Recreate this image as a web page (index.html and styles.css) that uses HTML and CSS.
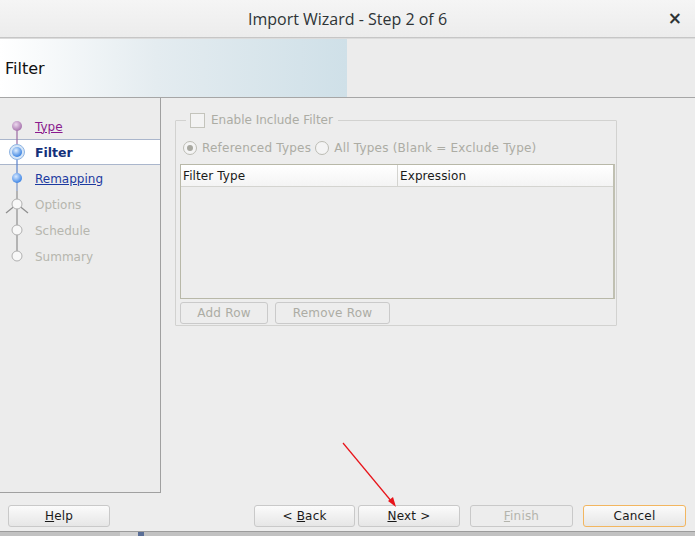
FILE: index.html
```html
<!DOCTYPE html>
<html>
<head>
<meta charset="utf-8">
<link rel="stylesheet" href="styles.css">
</head>
<body>
<div class="screen">
  <div class="dialog">
    <div class="titlebar">
      <span class="title">Import Wizard - Step 2 of 6</span>
      <span class="close">×</span>
    </div>
    <div class="header">
      <div class="header-grad"><span class="header-text">Filter</span></div>
    </div>
    <div class="main">
      <div class="steps">
        <div class="step">
          <svg class="step-icon" width="30" height="26" viewBox="0 0 30 26">
            <defs>
              <radialGradient id="gp" cx="40%" cy="35%" r="65%"><stop offset="0" stop-color="#ecd8ee"/><stop offset="1" stop-color="#a774ad"/></radialGradient>
            </defs>
            <line x1="17" y1="13" x2="17" y2="26" stroke="#9a6aa2" stroke-width="1.2"/>
            <circle cx="17" cy="13" r="5" fill="url(#gp)"/>
          </svg>
          <a class="step-label visited">Type</a>
        </div>
        <div class="step current">
          <svg class="step-icon" width="30" height="26" viewBox="0 0 30 26">
            <defs>
              <radialGradient id="gb" cx="40%" cy="35%" r="65%"><stop offset="0" stop-color="#dfeeff"/><stop offset="1" stop-color="#3c84e2"/></radialGradient>
            </defs>
            <line x1="17" y1="0" x2="17" y2="12" stroke="#9a6aa2" stroke-width="1.2"/>
            <line x1="17" y1="13" x2="17" y2="26" stroke="#5a82cc" stroke-width="1.2"/>
            <circle cx="17" cy="13" r="7.5" fill="#d6e6f8" stroke="#8fb4e2" stroke-width="1"/>
            <circle cx="17" cy="13" r="5" fill="url(#gb)"/>
          </svg>
          <span class="step-label current-label">Filter</span>
        </div>
        <div class="step">
          <svg class="step-icon" width="30" height="26" viewBox="0 0 30 26">
            <defs>
              <radialGradient id="gb2" cx="40%" cy="35%" r="65%"><stop offset="0" stop-color="#d6e8ff"/><stop offset="1" stop-color="#3f86e6"/></radialGradient>
            </defs>
            <line x1="17" y1="0" x2="17" y2="13" stroke="#5a82cc" stroke-width="1.2"/>
            <line x1="17" y1="13" x2="17" y2="26" stroke="#7f96c4" stroke-width="1.2"/>
            <circle cx="17" cy="13" r="5" fill="url(#gb2)"/>
          </svg>
          <a class="step-label link">Remapping</a>
        </div>
        <div class="step">
          <svg class="step-icon" width="30" height="26" viewBox="0 0 30 26">
            <line x1="17" y1="0" x2="17" y2="26" stroke="#8e8e8e" stroke-width="1.2"/>
            <line x1="17" y1="13" x2="6" y2="22" stroke="#8e8e8e" stroke-width="1.2"/>
            <line x1="17" y1="13" x2="28" y2="22" stroke="#8e8e8e" stroke-width="1.2"/>
            <circle cx="17" cy="13" r="5" fill="#f8f8f8" stroke="#b0b0b0" stroke-width="1"/>
          </svg>
          <span class="step-label disabled">Options</span>
        </div>
        <div class="step">
          <svg class="step-icon" width="30" height="26" viewBox="0 0 30 26">
            <line x1="17" y1="0" x2="17" y2="26" stroke="#8e8e8e" stroke-width="1.2"/>
            <circle cx="17" cy="13" r="5" fill="#f8f8f8" stroke="#b0b0b0" stroke-width="1"/>
          </svg>
          <span class="step-label disabled">Schedule</span>
        </div>
        <div class="step">
          <svg class="step-icon" width="30" height="26" viewBox="0 0 30 26">
            <line x1="17" y1="0" x2="17" y2="13" stroke="#8e8e8e" stroke-width="1.2"/>
            <circle cx="17" cy="13" r="5" fill="#f8f8f8" stroke="#b0b0b0" stroke-width="1"/>
          </svg>
          <span class="step-label disabled">Summary</span>
        </div>
      </div>
      <div class="content">
        <fieldset class="group">
          <legend class="group-legend"><span class="checkbox"></span><span class="dis-text">Enable Include Filter</span></legend>
          <div class="radios">
            <span class="radio on"></span><span class="dis-text">Referenced Types</span>
            <span class="radio second"></span><span class="dis-text">All Types (Blank = Exclude Type)</span>
          </div>
          <div class="table">
            <div class="thead">
              <div class="th th-first">Filter Type</div>
              <div class="th">Expression</div>
            </div>
            <div class="tbody"></div>
          </div>
          <div class="row-buttons">
            <span class="btn-small add">Add Row</span>
            <span class="btn-small remove">Remove Row</span>
          </div>
        </fieldset>
      </div>
    </div>
    <div class="footer">
      <span class="btn help"><span><u>H</u>elp</span></span>
      <div class="nav">
        <span class="btn back"><span>&lt; <u>B</u>ack</span></span>
        <span class="btn next"><span><u>N</u>ext &gt;</span></span>
        <span class="btn finish"><span><u>F</u>inish</span></span>
        <span class="btn cancel"><span>Cancel</span></span>
      </div>
    </div>
  </div>
  <div class="behind">
    <span class="behind-text">ager</span>
    <span class="behind-light"></span>
    <span class="behind-blue"></span>
  </div>
  <svg class="arrow" width="695" height="536" viewBox="0 0 695 536">
    <line x1="343" y1="443" x2="392" y2="502" stroke="#e8141a" stroke-width="1.2"/>
    <polygon points="396,507 388,501 393,497" fill="#e8141a"/>
  </svg>
</div>
</body>
</html>
```
FILE: styles.css
```css
html, body {
  margin: 0;
  padding: 0;
  background: #ededed;
}
.screen {
  position: relative;
  width: 695px;
  height: 536px;
  overflow: hidden;
  font-family: "DejaVu Sans", sans-serif;
  font-size: 12px;
}
.dialog {
  display: flex;
  flex-direction: column;
  height: 531px;
  background: #ededed;
}
.titlebar {
  height: 38px;
  box-sizing: border-box;
  border-bottom: 1px solid #c6c6c6;
  background: linear-gradient(#f5f5f5, #ececec);
  display: flex;
  align-items: center;
  justify-content: center;
  position: relative;
  box-shadow: 0 1px 0 #dcdcdc;
}
.title {
  font-family: "Open Sans", sans-serif;
  font-size: 16px;
  color: #2e3436;
}
.close {
  position: absolute;
  right: 13px;
  top: 8px;
  font-family: "DejaVu Sans", sans-serif;
  font-size: 17px;
  font-weight: bold;
  color: #2e3436;
}
.header {
  height: 59px;
  box-sizing: border-box;
  margin-top: 1px;
  border-bottom: 1px solid #a6a6a6;
  background: #ececec;
  display: flex;
}
.header-grad {
  width: 347px;
  background: linear-gradient(to right, #ffffff, #e4ecf0 45%, #cfe0e8);
  display: flex;
  align-items: center;
  padding-left: 5px;
  box-sizing: border-box;
}
.header-text {
  font-size: 16px;
  color: #111;
  padding-top: 1px;
}
.main {
  display: flex;
  height: 395px;
}
.steps {
  width: 161px;
  box-sizing: border-box;
  border-right: 1px solid #a0a0a0;
  border-bottom: 1px solid #a0a0a0;
  padding-top: 15px;
  background: #ececec;
}
.step {
  height: 26px;
  box-sizing: border-box;
  display: flex;
  align-items: center;
}
.step.current {
  background: #ffffff;
  border-top: 1px solid #aab6cc;
  border-bottom: 1px solid #aab6cc;
}
.step-icon {
  display: block;
  flex: none;
  width: 30px;
  height: 26px;
}
.step.current .step-icon {
  margin-top: -1px;
  margin-bottom: -1px;
}
.step-label {
  margin-left: 5px;
  font-size: 12px;
  padding-top: 1px;
}
.visited {
  color: #8a1a8e;
  text-decoration: underline;
}
.link {
  color: #1c3aa0;
  text-decoration: underline;
}
.current-label {
  color: #14307a;
  font-weight: bold;
  font-size: 12.5px;
}
.disabled {
  color: #b6b6ae;
}
.content {
  flex: 1;
  padding: 14px 0 0 14px;
}
.group {
  width: 442px;
  box-sizing: border-box;
  margin: 0;
  padding: 10px 1px 1px 4px;
  border: 1px solid #d2d2d0;
  border-radius: 1px;
}
.group-legend {
  margin-left: 6px;
  padding: 0 5px 0 4px;
  display: flex;
  align-items: center;
  height: 16px;
}
.checkbox {
  display: inline-block;
  width: 13px;
  height: 13px;
  border: 1px solid #c4c4bc;
  background: #f3f3f3;
  margin-right: 6px;
}
.dis-text {
  color: #acaca4;
}
.radios {
  display: flex;
  align-items: center;
  height: 18px;
  padding-top: 1px;
  box-sizing: border-box;
  letter-spacing: 0.22px;
}
.radio {
  display: inline-block;
  width: 12px;
  height: 12px;
  border: 1px solid #bcbcb4;
  border-radius: 50%;
  background: #f4f4f4;
  margin-left: 3px;
  margin-right: 5px;
  position: relative;
  flex: none;
}
.radio.second {
  margin-left: 4px;
}
.radio.on::after {
  content: "";
  position: absolute;
  left: 3px;
  top: 3px;
  width: 6px;
  height: 6px;
  border-radius: 50%;
  background: #a8a8a0;
}
.table {
  margin-top: 8px;
  height: 135px;
  box-sizing: border-box;
  border: 1px solid #b8b8a8;
  border-right: 2px solid #c0c0b2;
  display: flex;
  flex-direction: column;
}
.thead {
  display: flex;
  height: 22px;
  box-sizing: border-box;
  border-bottom: 1px solid #d4d4d0;
  background: linear-gradient(#ffffff, #f4f4f4);
}
.th {
  display: flex;
  align-items: center;
  padding-left: 2px;
  color: #1a1a1a;
  flex: 1;
  letter-spacing: 0.1px;
}
.th-first {
  flex: none;
  width: 214px;
  border-right: 1px solid #d4d4d0;
}
.tbody {
  flex: 1;
}
.row-buttons {
  display: flex;
  gap: 7px;
  margin-top: 3px;
}
.btn-small {
  height: 22px;
  box-sizing: border-box;
  border: 1px solid #cacaca;
  border-radius: 3px;
  display: flex;
  align-items: center;
  justify-content: center;
  color: #acaca4;
  background: #ededed;
  letter-spacing: 0.2px;
}
.add { width: 88px; }
.remove { width: 115px; }
.footer {
  height: 38px;
  box-sizing: border-box;
  padding: 12px 9px 0 8px;
  display: flex;
}
.nav {
  margin-left: auto;
  display: flex;
}
.btn {
  height: 22px;
  box-sizing: border-box;
  border: 1px solid #c9c9c9;
  border-radius: 3px;
  background: linear-gradient(#fbfbfb, #e6e6e6);
  display: flex;
  align-items: center;
  justify-content: center;
  color: #1a1a1a;
  font-size: 12px;
  letter-spacing: 0.2px;
}
.help { width: 102px; }
.back { width: 101px; }
.next { width: 102px; margin-left: 3px; }
.finish {
  width: 103px;
  margin-left: 10px;
  background: #ededed;
  color: #b4b4ac;
}
.cancel {
  width: 103px;
  margin-left: 10px;
  border-color: #f2b660;
}
.behind {
  height: 5px;
  display: flex;
  overflow: hidden;
  background: #c2c2c2;
  border-top: 1px solid #9c9c9c;
  box-sizing: border-box;
}
.behind-text {
  font-size: 12px;
  line-height: 12px;
  color: #333;
  padding-left: 2px;
  margin-top: 1px;
  width: 118px;
}
.behind-light {
  width: 18px;
  background: #d2d2d2;
}
.behind-blue {
  width: 6px;
  background: #5a6e96;
}
.arrow {
  position: absolute;
  left: 0;
  top: 0;
  pointer-events: none;
}
```
